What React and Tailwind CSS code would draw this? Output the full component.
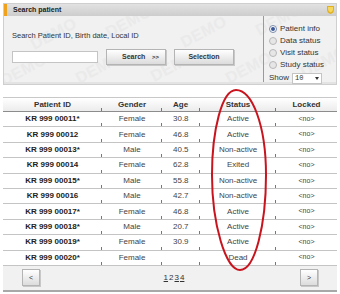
import React from 'react';

const ROWS = [
  { id: 'KR 999 00011*', gender: 'Female', age: '30.8', status: 'Active' },
  { id: 'KR 999 00012', gender: 'Female', age: '46.8', status: 'Active' },
  { id: 'KR 999 00013*', gender: 'Male', age: '40.5', status: 'Non-active' },
  { id: 'KR 999 00014', gender: 'Female', age: '62.8', status: 'Exited' },
  { id: 'KR 999 00015*', gender: 'Male', age: '55.8', status: 'Non-active' },
  { id: 'KR 999 00016', gender: 'Male', age: '42.7', status: 'Non-active' },
  { id: 'KR 999 00017*', gender: 'Female', age: '46.8', status: 'Active' },
  { id: 'KR 999 00018*', gender: 'Male', age: '20.7', status: 'Active' },
  { id: 'KR 999 00019*', gender: 'Female', age: '30.9', status: 'Active' },
  { id: 'KR 999 00020*', gender: 'Female', age: '', status: 'Dead' },
];

const COLS = 'grid grid-cols-[99px_60px_38px_76px_61px]';

function Tick() {
  return <span className="absolute right-0 bottom-0 h-[3px] w-px bg-[#777]" />;
}

// faint "DEMO" watermark behind the search panel
function Watermark() {
  const spots = [
    [25, 6], [100, -6], [175, 4], [250, -8],
    [-5, 42], [70, 40], [145, 38], [220, 40], [295, 34],
  ];
  return (
    <div aria-hidden="true" className="pointer-events-none absolute inset-0 overflow-hidden">
      {spots.map(([x, y], i) => (
        <span
          key={i}
          className="absolute -rotate-[28deg] text-[16px] font-bold text-[#eaeaea] tracking-wide"
          style={{ left: x, top: y }}
        >
          DEMO
        </span>
      ))}
    </div>
  );
}

function Radio({ checked, label }) {
  return (
    <div className="flex h-[12.5px] items-center gap-[3px]">
      <span
        className={[
          'flex h-[8px] w-[8px] items-center justify-center rounded-full border',
          checked ? 'border-[#7a8aa8] bg-white' : 'border-[#b8b8b8] bg-[#e6e6e6]',
        ].join(' ')}
      >
        {checked && <span className="h-[4px] w-[4px] rounded-full bg-[#3c5a9a]" />}
      </span>
      <span>{label}</span>
    </div>
  );
}

function Btn({ children, className = '' }) {
  return (
    <div
      className={[
        'flex items-center border border-[#b4b4b4] bg-gradient-to-b from-white to-[#dcdcdc] shadow-[1px_1px_0_#c8c8c8] text-[7px] font-bold text-[#333]',
        className,
      ].join(' ')}
    >
      {children}
    </div>
  );
}

export default function App() {
  return (
    <div className="relative h-[294px] w-[340px] overflow-hidden bg-white font-['Liberation_Sans',Arial,sans-serif] text-[#333]">
      {/* search panel */}
      <div className="mx-[3px] mt-[3px] border border-[#cfcfcf]">
        <div className="flex h-[12px] items-center justify-between border-l-[3px] border-[#f0a21c] bg-gradient-to-b from-[#e2e2e2] to-[#cdcdcd] pl-[6px] pr-[2px]">
          <span className="text-[7px] font-bold text-[#222]">Search patient</span>
          <svg width="7" height="8" viewBox="0 0 7 8">
            <path d="M0 0h7v3.5Q7 7 3.5 8Q0 7 0 3.5z" fill="#e0b020" />
            <path d="M1 1h5v2.5Q6 5.5 3.5 6.5Q1 5.5 1 3z" fill="#f6d860" />
          </svg>
        </div>
        <div className="relative flex h-[66px] bg-[#f1f1f1]">
          <Watermark />
          <div className="relative flex w-[259px] flex-col pl-[8px] pt-[14px]">
            <span className="text-[7.5px] text-[#333]">Search Patient ID, Birth date, Local ID</span>
            <div className="mt-[8px] flex items-center">
              <div className="h-[12px] w-[86px] border border-[#c4c4c4] bg-white" />
              <Btn className="ml-[8px] h-[16px] w-[60px] justify-between pl-[15px] pr-[6px]">
                <span>Search</span>
                <span className="text-[6px]">&gt;&gt;</span>
              </Btn>
              <Btn className="ml-[8px] h-[16px] w-[60px] justify-center">Selection</Btn>
            </div>
          </div>
          <div className="relative flex flex-1 flex-col border-l border-[#9a9a9a] pl-[5px] pt-[7px] text-[8px] text-[#333]">
            <Radio checked label="Patient info" />
            <Radio label="Data status" />
            <Radio label="Visit status" />
            <Radio label="Study status" />
            <div className="mt-[1px] flex items-center gap-[3px]">
              <span>Show</span>
              <div className="flex h-[11px] w-[30px] items-center justify-between border border-[#c4c4c4] bg-white px-[2px] font-['Liberation_Mono',monospace] text-[7px]">
                <span>10</span>
                <span className="h-0 w-0 border-x-[2.5px] border-t-[3px] border-x-transparent border-t-[#333]" />
              </div>
            </div>
          </div>
        </div>
        <div className="h-[2px] bg-[#e3e3e3]" />
      </div>

      {/* table */}
      <div className="mx-[3px] mt-[12px] border-t border-[#c8c8c8]">
        <div className={`${COLS} h-[14px] items-center border-b border-[#8c8c8c] bg-gradient-to-b from-white to-[#ececec] text-[8px] font-semibold text-[#333]`}>
          <div className="relative flex h-full items-center justify-center">Patient ID<Tick /></div>
          <div className="relative flex h-full items-center justify-center">Gender<Tick /></div>
          <div className="relative flex h-full items-center pl-[11px]">Age<Tick /></div>
          <div className="relative flex h-full items-center justify-center">Status<Tick /></div>
          <div className="flex h-full items-center justify-center">Locked</div>
        </div>
        {ROWS.map((r) => (
          <div key={r.id} className={`${COLS} h-[15.4px] items-center border-b border-[#c4c4c4] text-[8px] text-[#444]`}>
            <div className="relative flex h-full items-center justify-center font-bold text-[#222]">{r.id}<Tick /></div>
            <div className="relative flex h-full items-center justify-center">{r.gender}<Tick /></div>
            <div className="relative flex h-full items-center pl-[11px]">{r.age}<Tick /></div>
            <div className="relative flex h-full items-center justify-center">{r.status}<Tick /></div>
            <div className="flex h-full items-center justify-center text-[7px]">&lt;no&gt;</div>
          </div>
        ))}
        <div className="flex h-[24px] items-center justify-between bg-[#f1f1f1] px-[19px]">
          <Btn className="h-[17px] w-[18px] justify-center font-normal">&lt;</Btn>
          <div className="flex gap-[1px] pl-[8px] text-[8px] text-[#333]">
            <span className="underline">1</span>
            <span>2</span>
            <span className="underline">3</span>
            <span className="underline">4</span>
          </div>
          <Btn className="h-[17px] w-[18px] justify-center font-normal">&gt;</Btn>
        </div>
        <div className="h-[2px] bg-[#a8a8a8]" />
      </div>

      {/* red annotation */}
      <svg className="pointer-events-none absolute left-0 top-0" width="340" height="294">
        <path
          d="M236 90 C 222 90, 212 130, 212 175 C 212 225, 226 270, 240 270 C 255 270, 266 225, 266 175 C 266 125, 252 90, 236 90 Z"
          fill="none"
          stroke="#c8141e"
          strokeWidth="2"
        />
      </svg>
    </div>
  );
}
